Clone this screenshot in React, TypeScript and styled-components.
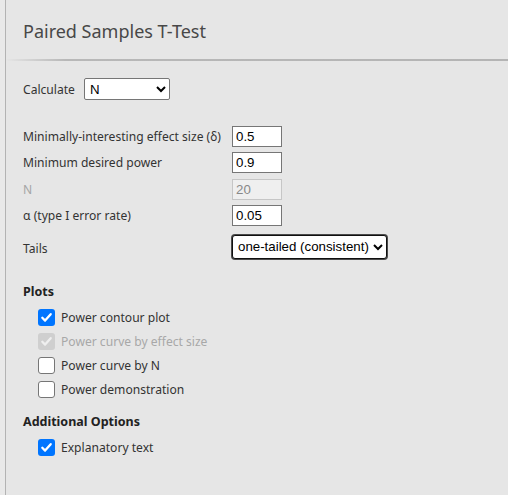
import * as React from "react";
import styled, { createGlobalStyle } from "styled-components";

const GlobalStyle = createGlobalStyle`
  html, body {
    margin: 0;
    padding: 0;
    background: #e6e6e6;
    font-family: "Noto Sans", "Open Sans", sans-serif;
    color: #333;
  }
`;

const Page = styled.div`
  display: flex;
  min-height: 495px;
  width: 508px;
  overflow: hidden;
`;

const Gutter = styled.div`
  width: 5px;
  flex: none;
  background: #e9e9e9;
  border-right: 1px solid #b3b3b3;
`;

const Panel = styled.div`
  flex: 1;
  display: flex;
  flex-direction: column;
`;

const Header = styled.div`
  height: 59px;
  padding-left: 17px;
  display: flex;
  align-items: center;
  border-bottom: 2px solid transparent;
  border-image: linear-gradient(to right, rgba(180, 180, 180, 0) 0px, #b8b8b8 60px, #b4b4b4 100%) 1;
`;

const Title = styled.div`
  font-size: 18px;
  font-weight: 400;
  color: #484848;
  padding-top: 2px;
`;

const Body = styled.div`
  padding: 17px 0 0 17px;
  display: flex;
  flex-direction: column;
  font-size: 12.1px;
`;

const CalcRow = styled.div`
  display: flex;
  align-items: center;
  gap: 9px;
  height: 22px;
`;

const Label = styled.span<{ $disabled?: boolean }>`
  color: ${(p) => (p.$disabled ? "#a5a5a5" : "#333")};
  white-space: nowrap;
`;

const Select = styled.select<{ $w: number; $focus?: boolean }>`
  width: ${(p) => p.$w}px;
  height: ${(p) => (p.$focus ? 24 : 22)}px;
  font-family: "Liberation Sans", Arial, sans-serif;
  font-size: 13.3px;
  color: #000;
  background: #fff;
  border: ${(p) => (p.$focus ? "1px solid #101010" : "1px solid #767676")};
  border-radius: ${(p) => (p.$focus ? 3 : 2)}px;
  box-shadow: ${(p) => (p.$focus ? "0 0 0 1px #4a4a4a" : "none")};
  padding: 0 0 0 1px;
  margin: 0;
`;

const Options = styled.div`
  margin-top: 26px;
  display: grid;
  grid-template-columns: 209px auto;
  grid-auto-rows: 26.4px;
  align-items: start;
`;

const RowLabel = styled(Label)`
  line-height: 21px;
`;

const TailsLabel = styled(Label)`
  line-height: 24px;
  margin-top: 5px;
`;

const Field = styled.input`
  width: 50px;
  height: 21px;
  box-sizing: border-box;
  font-family: "Liberation Sans", Arial, sans-serif;
  font-size: 13.3px;
  color: #000;
  background: #fff;
  border: 1px solid #767676;
  border-radius: 0;
  padding: 0 3px;
  margin: 0;
  &:disabled {
    background: #efefef;
    border-color: #c6c6c6;
    color: #888;
  }
`;

const TailsCell = styled.div`
  margin-top: 3px;
`;

const Section = styled.div<{ $top: number }>`
  margin-top: ${(p) => p.$top}px;
  display: flex;
  flex-direction: column;
`;

const Heading = styled.div`
  font-size: 12.5px;
  font-weight: 700;
  color: #222;
  line-height: 18px;
  margin-bottom: 5px;
`;

const CheckRow = styled.label<{ $disabled?: boolean }>`
  display: flex;
  align-items: center;
  gap: 6px;
  height: 24px;
  padding-left: 15px;
  font-size: 12.1px;
  color: ${(p) => (p.$disabled ? "#a8a8a8" : "#333")};
`;

const Box = styled.span<{ $checked?: boolean; $disabled?: boolean }>`
  width: 17px;
  height: 17px;
  flex: none;
  box-sizing: border-box;
  border-radius: 3px;
  display: flex;
  align-items: center;
  justify-content: center;
  background: ${(p) =>
    p.$disabled ? "#cfcfcf" : p.$checked ? "#0075ff" : "#fff"};
  border: ${(p) =>
    p.$checked || p.$disabled ? "none" : "1px solid #767676"};
`;

const Check = ({ color }: { color: string }) => (
  <svg width="13" height="13" viewBox="0 0 13 13">
    <path
      d="M2.3 6.8 L5.1 9.6 L10.7 3.2"
      fill="none"
      stroke={color}
      strokeWidth="2.3"
      strokeLinecap="round"
      strokeLinejoin="round"
    />
  </svg>
);

interface CheckItemProps {
  label: string;
  checked?: boolean;
  disabled?: boolean;
}

const CheckItem = ({ label, checked, disabled }: CheckItemProps) => (
  <CheckRow $disabled={disabled}>
    <Box $checked={checked} $disabled={disabled}>
      {(checked || disabled) && <Check color={disabled ? "#efefef" : "#fff"} />}
    </Box>
    {label}
  </CheckRow>
);

const App = () => {
  return (
    <Page>
      <GlobalStyle />
      <Gutter />
      <Panel>
        <Header>
          <Title>Paired Samples T-Test</Title>
        </Header>
        <Body>
          <CalcRow>
            <Label>Calculate</Label>
            <Select $w={86} defaultValue="N">
              <option value="N">N</option>
              <option value="power">Power</option>
              <option value="es">Effect size</option>
            </Select>
          </CalcRow>
          <Options>
            <RowLabel>Minimally-interesting effect size (δ)</RowLabel>
            <Field defaultValue="0.5" />
            <RowLabel>Minimum desired power</RowLabel>
            <Field defaultValue="0.9" />
            <RowLabel $disabled>N</RowLabel>
            <Field defaultValue="20" disabled />
            <RowLabel>α (type I error rate)</RowLabel>
            <Field defaultValue="0.05" />
            <TailsLabel>Tails</TailsLabel>
            <TailsCell>
              <Select $w={155} $focus defaultValue="one">
                <option value="one">one-tailed (consistent)</option>
                <option value="two">two-tailed</option>
              </Select>
            </TailsCell>
          </Options>
          <Section $top={25}>
            <Heading>Plots</Heading>
            <CheckItem label="Power contour plot" checked />
            <CheckItem label="Power curve by effect size" checked disabled />
            <CheckItem label="Power curve by N" />
            <CheckItem label="Power demonstration" />
          </Section>
          <Section $top={11}>
            <Heading>Additional Options</Heading>
            <CheckItem label="Explanatory text" checked />
          </Section>
        </Body>
      </Panel>
    </Page>
  );
};

export default App;
